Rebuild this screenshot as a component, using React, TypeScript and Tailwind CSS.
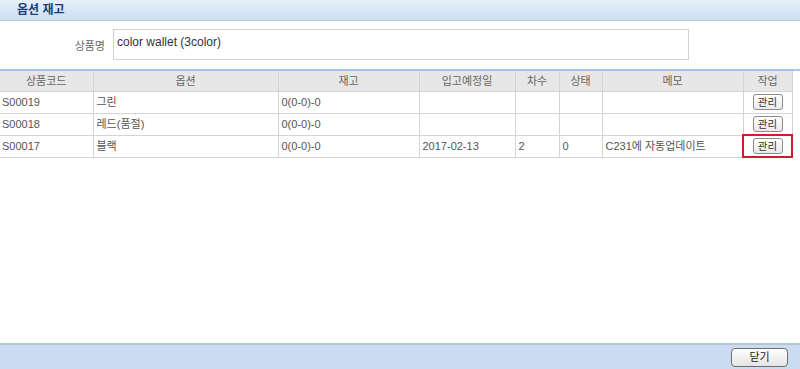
import React from "react";

type Row = {
	code: string;
	option: string;
	stock: string;
	date: string;
	seq: string;
	status: string;
	memo: string;
	highlight?: boolean;
};

const rows: Row[] = [
	{ code: "S00019", option: "그린", stock: "0(0-0)-0", date: "", seq: "", status: "", memo: "" },
	{ code: "S00018", option: "레드(품절)", stock: "0(0-0)-0", date: "", seq: "", status: "", memo: "" },
	{
		code: "S00017",
		option: "블랙",
		stock: "0(0-0)-0",
		date: "2017-02-13",
		seq: "2",
		status: "0",
		memo: "C231에 자동업데이트",
		highlight: true,
	},
];

const headers = ["상품코드", "옵션", "재고", "입고예정일", "차수", "상태", "메모", "작업"];
const widths = ["w-[93px]", "w-[185px]", "w-[141px]", "w-[96px]", "w-[44px]", "w-[43px]", "w-[141px]", "w-[49px]"];

const font = { fontFamily: '"Liberation Sans", "Noto Sans CJK KR", sans-serif' };

const SmallButton = ({ label }: { label: string }) => (
	<button className="h-[16px] w-[30px] rounded-[3px] border border-[#8a8a8a] bg-gradient-to-b from-white to-[#e9e9e9] text-[10.5px] leading-[14px] text-[#333]">
		{label}
	</button>
);

export default function App() {
	return (
		<div className="flex h-[369px] w-[800px] flex-col bg-white text-[11px] text-[#555]" style={font}>
			<div className="flex h-[21px] items-center border-b border-[#b4c9e2] bg-gradient-to-b from-[#e6eff9] to-[#cddff1] pl-[17px]">
				<h1 className="text-[12px] font-bold text-[#1d3c7c]">옵션 재고</h1>
			</div>

			<div className="flex h-[48px] items-start pt-[8px]">
				<div className="w-[105px] pt-[9px] text-right text-[11px] text-[#666]">상품명</div>
				<div className="ml-[8px] h-[31px] w-[576px] border border-[#d2d2d2] px-[3px] pt-[3px] text-[12px] text-[#333]">
					color wallet (3color)
				</div>
			</div>

			<div className="border-t-[2px] border-[#a6c4e4]">
				<table className="w-[792px] table-fixed border-collapse">
					<colgroup>
						{widths.map((w, i) => (
							<col key={i} className={w} />
						))}
					</colgroup>
					<thead>
						<tr className="h-[20px] bg-[#e7e7e7]">
							{headers.map((h, i) => (
								<th
									key={h}
									className={`border-b border-[#d4d4d4] text-center text-[11px] font-normal text-[#666] ${
										i > 0 ? "border-l border-l-[#d4d4d4]" : ""
									} ${i === headers.length - 1 ? "border-r border-r-[#d4d4d4]" : ""}`}
								>
									{h}
								</th>
							))}
						</tr>
					</thead>
					<tbody>
						{rows.map((r) => (
							<tr key={r.code} className="h-[22px]">
								<td className="border-b border-[#d4d4d4] px-[2px]">{r.code}</td>
								<td className="border-b border-l border-[#d4d4d4] px-[3px]">{r.option}</td>
								<td className="border-b border-l border-[#d4d4d4] px-[3px]">{r.stock}</td>
								<td className="border-b border-l border-[#d4d4d4] px-[3px]">{r.date}</td>
								<td className="border-b border-l border-[#d4d4d4] px-[3px]">{r.seq}</td>
								<td className="border-b border-l border-[#d4d4d4] px-[3px]">{r.status}</td>
								<td className="border-b border-l border-[#d4d4d4] px-[3px]">{r.memo}</td>
								<td
									className={`border-b border-l border-r border-[#d4d4d4] text-center ${
										r.highlight ? "outline-2 -outline-offset-1 outline-[#c8202c]" : ""
									}`}
									style={r.highlight ? { outlineStyle: "solid" } : undefined}
								>
									<SmallButton label="관리" />
								</td>
							</tr>
						))}
					</tbody>
				</table>
			</div>

			<div className="flex-1" />

			<div className="flex h-[26px] items-center justify-end border-t-[2px] border-[#b8c4d0] bg-[#c9dcf1] pr-[12px]">
				<button className="h-[19px] w-[57px] rounded-[4px] border border-[#6f6f6f] bg-gradient-to-b from-white to-[#e4e4e4] text-[11px] text-[#222]">
					닫기
				</button>
			</div>
		</div>
	);
}
